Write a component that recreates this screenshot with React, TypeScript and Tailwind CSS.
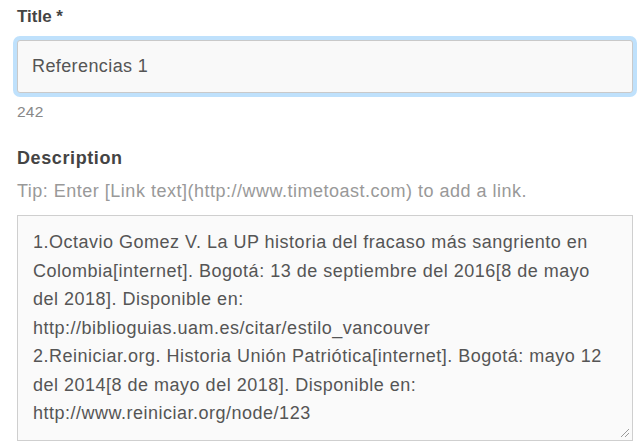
import React from "react";

const lines = [
  "1.Octavio Gomez V. La UP historia del fracaso más sangriento en",
  "Colombia[internet]. Bogotá: 13 de septiembre del 2016[8 de mayo",
  "del 2018]. Disponible en:",
  "http://biblioguias.uam.es/citar/estilo_vancouver",
  "2.Reiniciar.org. Historia Unión Patriótica[internet]. Bogotá: mayo 12",
  "del 2014[8 de mayo del 2018]. Disponible en:",
  "http://www.reiniciar.org/node/123",
];

export default function App() {
  return (
    <div
      className="w-[640px] h-[446px] overflow-hidden bg-white pl-[17px] pr-[7px]"
      style={{ fontFamily: '"Liberation Sans", Arial, sans-serif' }}
    >
      <div className="pt-[6px] h-[22px] box-content text-[17px] font-bold leading-[22px] text-[#444]">
        Title *
      </div>
      <div className="mt-[12px] h-[53px] w-[616px] rounded-[3px] border border-[#c9c9c9] bg-[#f9f9f9] pl-[14px] flex items-center text-[18px] tracking-[0.4px] text-[#555] shadow-[0_0_0_4px_#bfe1fc]">
        Referencias 1
      </div>
      <div className="mt-[10px] text-[15.5px] tracking-[0.2px] leading-[18px] text-[#888]">242</div>
      <div className="mt-[26px] text-[18px] tracking-[0.6px] font-bold leading-[22px] text-[#444]">
        Description
      </div>
      <div className="mt-[11px] text-[18px] tracking-[0.5px] leading-[22px] text-[#999]">
        Tip: Enter [Link text](http://www.timetoast.com) to add a link.
      </div>
      <div className="relative mt-[13px] h-[226px] w-[616px] border border-[#cfcfcf] bg-[#fafafa] pl-[15px] pt-[12px] text-[18px] tracking-[0.5px] leading-[28.5px] text-[#555]">
        {lines.map((l, i) => (
          <div key={i} className="whitespace-nowrap">
            {l}
          </div>
        ))}
        <svg
          className="absolute right-[2px] bottom-[2px]"
          width="10"
          height="10"
          viewBox="0 0 10 10"
        >
          <line x1="1" y1="9" x2="9" y2="1" stroke="#9a9a9a" strokeWidth="1" />
          <line x1="5" y1="9" x2="9" y2="5" stroke="#9a9a9a" strokeWidth="1" />
        </svg>
      </div>
    </div>
  );
}
